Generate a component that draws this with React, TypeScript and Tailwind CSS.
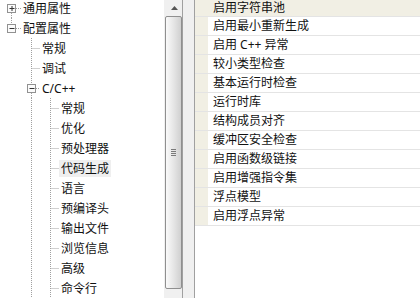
import React from "react";

type Node = {
  label: string;
  level: number;
  box?: "plus" | "minus";
  selected?: boolean;
};

const treeRows: Node[] = [
  { label: "通用属性", level: 0, box: "plus" },
  { label: "配置属性", level: 0, box: "minus" },
  { label: "常规", level: 1 },
  { label: "调试", level: 1 },
  { label: "C/C++", level: 1, box: "minus" },
  { label: "常规", level: 2 },
  { label: "优化", level: 2 },
  { label: "预处理器", level: 2 },
  { label: "代码生成", level: 2, selected: true },
  { label: "语言", level: 2 },
  { label: "预编译头", level: 2 },
  { label: "输出文件", level: 2 },
  { label: "浏览信息", level: 2 },
  { label: "高级", level: 2 },
  { label: "命令行", level: 2 },
];

const props = [
  "启用字符串池",
  "启用最小重新生成",
  "启用 C++ 异常",
  "较小类型检查",
  "基本运行时检查",
  "运行时库",
  "结构成员对齐",
  "缓冲区安全检查",
  "启用函数级链接",
  "启用增强指令集",
  "浮点模型",
  "启用浮点异常",
];

const lineX = [11.5, 31.5, 50.5];
const dot = { stroke: "#a0a0a0", strokeWidth: 1, strokeDasharray: "1 1" };

// connector lines for one row of the tree
function Gutter({ row, index }: { row: Node; index: number }) {
  const w = row.level === 0 ? 21 : row.level === 1 ? 40 : 59;
  const x = lineX[row.level];
  const segs: React.ReactNode[] = [];

  if (row.level === 0) {
    if (index === 0) segs.push(<line key="v" x1={x} y1={15} x2={x} y2={20} {...dot} />);
    else segs.push(<line key="v" x1={x} y1={0} x2={x} y2={6} {...dot} />);
  }
  if (row.level >= 1) {
    if (row.box) {
      segs.push(<line key="v1a" x1={lineX[1]} y1={0} x2={lineX[1]} y2={6} {...dot} />);
      segs.push(<line key="v1b" x1={lineX[1]} y1={15} x2={lineX[1]} y2={20} {...dot} />);
    } else {
      segs.push(<line key="v1" x1={lineX[1]} y1={0} x2={lineX[1]} y2={20} {...dot} />);
    }
  }
  if (row.level === 2) {
    segs.push(<line key="v2" x1={lineX[2]} y1={0} x2={lineX[2]} y2={20} {...dot} />);
  }
  const hx = row.box ? x + 4.5 : x + 1;
  segs.push(<line key="h" x1={hx} y1={10.5} x2={w} y2={10.5} {...dot} />);

  return (
    <svg width={w} height={20} className="shrink-0">
      {segs}
      {row.box && (
        <g>
          <rect x={x - 4} y={6.5} width={8} height={8} fill="#fbfbfb" stroke="#919191" />
          <line x1={x - 2} y1={10.5} x2={x + 3} y2={10.5} stroke="#333" />
          {row.box === "plus" && <line x1={x + 0.5} y1={8} x2={x + 0.5} y2={13} stroke="#333" />}
        </g>
      )}
    </svg>
  );
}

export default function App() {
  return (
    <div className="w-[420px] h-[298px] overflow-hidden flex bg-white text-[12px] text-[#111] font-['Noto_Sans','Noto_Sans_CJK_SC',sans-serif]">
      {/* Tree */}
      <div className="w-[164px] shrink-0 overflow-hidden">
        <div className="-mt-[2px]">
          {treeRows.map((row, i) => (
            <div key={i} className="h-[20px] flex items-center">
              <Gutter row={row} index={i} />
              <span
                className={`px-[2px] leading-[17px] whitespace-nowrap ${
                  row.selected ? "bg-[#efefef]" : ""
                }`}
              >
                {row.label}
              </span>
            </div>
          ))}
        </div>
      </div>

      {/* Scrollbar */}
      <div className="w-[18px] shrink-0 bg-[#f0f0f0] flex flex-col">
        <div className="h-[16px] flex items-center justify-center pl-[2px]">
          <svg width="7" height="4">
            <polygon points="3.5,0 7,4 0,4" fill="#555" />
          </svg>
        </div>
        <div className="ml-[1px] w-[17px] h-[273px] border border-[#8f8f8f] rounded-[2px] bg-gradient-to-r from-[#fafafa] via-[#e6e6e6] to-[#d0d0d0] flex items-center justify-center">
          <div className="flex flex-col gap-[1px]">
            <div className="w-[5px] h-[1px] bg-[#7a7a7a]" />
            <div className="w-[5px] h-[1px] bg-[#7a7a7a]" />
            <div className="w-[5px] h-[1px] bg-[#7a7a7a]" />
            <div className="w-[5px] h-[1px] bg-[#7a7a7a]" />
          </div>
        </div>
      </div>

      {/* Splitter */}
      <div className="w-[13px] shrink-0 bg-[#f0f0f0] border-x border-[#a0a0a0]" />

      {/* Property grid */}
      <div className="flex-1 overflow-hidden">
        {props.map((p, i) => (
          <div
            key={i}
            className={`${i === 0 ? "h-[17px] bg-[#f1efe4]" : "h-[19px]"} flex border-b border-[#e4e4e4]`}
          >
            <div className="w-[13px] shrink-0 bg-[#f1efe4]" />
            <div className="flex-1 pl-[5px] flex items-center whitespace-nowrap">{p}</div>
          </div>
        ))}
      </div>
    </div>
  );
}
